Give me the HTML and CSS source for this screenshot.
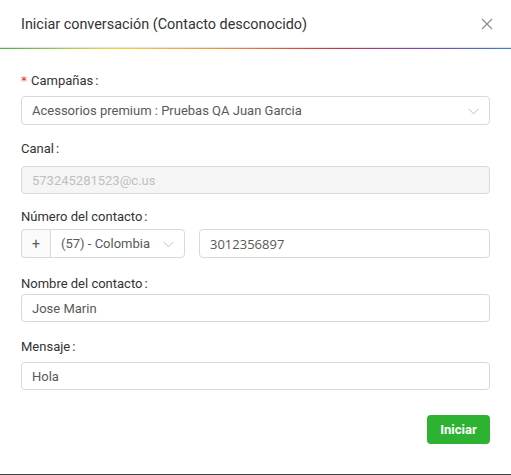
FILE: index.html
```html
<!DOCTYPE html>
<html lang="es">
<head>
<meta charset="utf-8">
<link rel="stylesheet" href="styles.css">
</head>
<body>
<div class="modal">
  <div class="modal-header">
    <div class="modal-title">Iniciar conversación (Contacto desconocido)</div>
    <button class="close" aria-label="Cerrar">
      <svg width="12" height="12" viewBox="0 0 12 12"><path d="M1 1L11 11M11 1L1 11" stroke="#8c8c8c" stroke-width="1.2" fill="none"/></svg>
    </button>
  </div>
  <div class="rainbow"></div>
  <div class="modal-body">
    <div class="item item-campanas">
      <div class="label"><span class="req">*</span>Campañas<span class="colon">:</span></div>
      <div class="control select">
        <span class="value">Acessorios premium : Pruebas QA Juan Garcia</span>
        <svg class="chev" width="11" height="7" viewBox="0 0 11 7"><path d="M0.5 0.8L5.5 5.8L10.5 0.8" stroke="#bfbfbf" stroke-width="1" fill="none"/></svg>
      </div>
    </div>
    <div class="item item-canal">
      <div class="label">Canal<span class="colon">:</span></div>
      <div class="control disabled"><span class="value">573245281523@c.us</span></div>
    </div>
    <div class="item item-numero">
      <div class="label">Número del contacto<span class="colon">:</span></div>
      <div class="phone-row">
        <div class="addon">+</div>
        <div class="control select country">
          <span class="value">(57) - Colombia</span>
          <svg class="chev" width="11" height="7" viewBox="0 0 11 7"><path d="M0.5 0.8L5.5 5.8L10.5 0.8" stroke="#bfbfbf" stroke-width="1" fill="none"/></svg>
        </div>
        <div class="control phone"><span class="value">3012356897</span></div>
      </div>
    </div>
    <div class="item item-nombre">
      <div class="label">Nombre del contacto<span class="colon">:</span></div>
      <div class="control"><span class="value">Jose Marin</span></div>
    </div>
    <div class="item item-mensaje">
      <div class="label">Mensaje<span class="colon">:</span></div>
      <div class="control"><span class="value">Hola</span></div>
    </div>
    <div class="actions">
      <button class="btn-primary">Iniciar</button>
    </div>
  </div>
</div>
</body>
</html>
```
FILE: styles.css
```css
html, body {
  margin: 0;
  padding: 0;
  background: #ffffff;
}
body {
  font-family: Roboto, "Liberation Sans", Arial, sans-serif;
  color: rgba(0, 0, 0, 0.85);
  width: 511px;
  height: 475px;
  overflow: hidden;
}
.modal {
  width: 511px;
  height: 474px;
  background: #fff;
  border-bottom: 1px solid #444;
  border-radius: 2px 2px 0 0;
  position: relative;
}
.modal-header {
  height: 48px;
  display: flex;
  align-items: center;
  justify-content: space-between;
  padding: 0 18px 0 21px;
  box-sizing: border-box;
  border-bottom: 1px solid #e4e4e4;
}
.modal-title {
  font-size: 14.4px;
  color: #333;
  padding-top: 1px;
}
.close {
  border: 0;
  background: transparent;
  padding: 0;
  width: 12px;
  height: 12px;
  display: flex;
  align-items: center;
  justify-content: center;
  cursor: pointer;
}
.rainbow {
  height: 1px;
  background: linear-gradient(to right, #4caf50 0%, #9ccc45 12%, #f6d23a 22%, #f4b537 32%, #ef8a35 45%, #e5473a 58%, #c93346 66%, #a43a86 74%, #7d47b6 84%, #5a63cc 92%, #3a7fd8 100%);
}
.modal-body {
  padding: 22px 21px 0 21px;
}
.item {
  margin-bottom: 14px;
}
.label {
  font-size: 13px;
  line-height: 20px;
  height: 20px;
  color: #333;
  margin-bottom: 5px;
}
.req {
  color: #f5222d;
  margin-right: 4px;
  font-family: SimSun, "DejaVu Sans", sans-serif;
  font-size: 12px;
}
.colon {
  margin-left: 2px;
}
.control {
  box-sizing: border-box;
  height: 28px;
  border: 1px solid #d9d9d9;
  border-radius: 4px;
  background: #fff;
  display: flex;
  align-items: center;
  padding: 0 11px 0 10px;
  font-size: 13px;
  color: #595959;
}
.select {
  justify-content: space-between;
  padding-right: 10px;
}
.chev {
  display: block;
  margin-top: 1px;
}
.disabled {
  background: #f5f5f5;
  color: #bfbfbf;
}
.item-campanas .control { height: 29px; }
.item-canal .label { margin-bottom: 7px; }
.item-canal { margin-bottom: 13px; }
.item-numero .label { margin-bottom: 2px; }
.item-numero { margin-bottom: 16px; }
.item-nombre .label { margin-bottom: 0; }
.item-nombre { margin-bottom: 15px; }
.item-mensaje .label { margin-bottom: 5px; }
.item-mensaje { margin-bottom: 25px; }
.phone-row {
  display: flex;
  align-items: stretch;
  height: 29px;
}
.addon {
  box-sizing: border-box;
  width: 29px;
  border: 1px solid #d9d9d9;
  border-right: 0;
  border-radius: 4px 0 0 4px;
  background: #fafafa;
  display: flex;
  align-items: center;
  justify-content: center;
  font-size: 14px;
  color: #595959;
}
.country {
  width: 135px;
  height: 29px;
  border-radius: 0 4px 4px 0;
  padding-left: 10px;
  margin-right: 14px;
}
.phone {
  flex: 1;
  height: 29px;
  font-family: "Open Sans", "Liberation Sans", sans-serif;
  font-size: 13px;
}
.actions {
  display: flex;
  justify-content: flex-end;
}
.btn-primary {
  box-sizing: border-box;
  width: 63px;
  height: 29px;
  border: 0;
  border-radius: 4px;
  background: #2db232;
  color: #fff;
  font-family: Roboto, "Liberation Sans", sans-serif;
  font-weight: 700;
  font-size: 13px;
  padding: 0;
}
```
